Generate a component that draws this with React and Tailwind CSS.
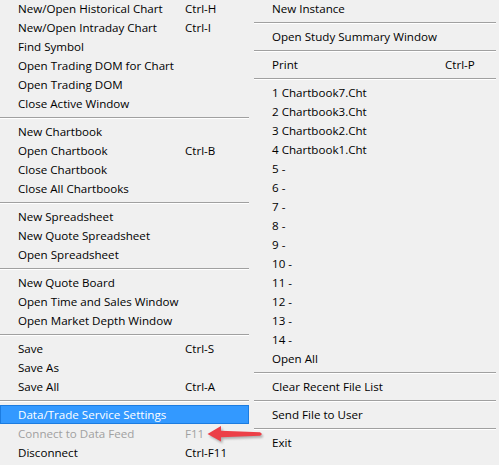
import React from 'react';

const leftGroups = [
  [
    ['New/Open Historical Chart', 'Ctrl-H'],
    ['New/Open Intraday Chart', 'Ctrl-I'],
    ['Find Symbol'],
    ['Open Trading DOM for Chart'],
    ['Open Trading DOM'],
    ['Close Active Window'],
  ],
  [
    ['New Chartbook'],
    ['Open Chartbook', 'Ctrl-B'],
    ['Close Chartbook'],
    ['Close All Chartbooks'],
  ],
  [['New Spreadsheet'], ['New Quote Spreadsheet'], ['Open Spreadsheet']],
  [['New Quote Board'], ['Open Time and Sales Window'], ['Open Market Depth Window']],
  [['Save', 'Ctrl-S'], ['Save As'], ['Save All', 'Ctrl-A']],
  [
    ['Data/Trade Service Settings', '', 'active'],
    ['Connect to Data Feed', 'F11', 'disabled'],
    ['Disconnect', 'Ctrl-F11'],
  ],
];

const rightGroups = [
  [['New Instance']],
  [['Open Study Summary Window']],
  [['Print', 'Ctrl-P']],
  [
    ['1 Chartbook7.Cht'],
    ['2 Chartbook3.Cht'],
    ['3 Chartbook2.Cht'],
    ['4 Chartbook1.Cht'],
    ['5 -'],
    ['6 -'],
    ['7 -'],
    ['8 -'],
    ['9 -'],
    ['10 -'],
    ['11 -'],
    ['12 -'],
    ['13 -'],
    ['14 -'],
    ['Open All'],
  ],
  [['Clear Recent File List']],
  [['Send File to User']],
  [['Exit']],
];

const Separator = () => (
  <div className="h-[9px] flex flex-col justify-center">
    <div className="h-px bg-[#a0a0a0]" />
    <div className="h-px bg-white" />
  </div>
);

const Item = ({ label, shortcut, state, labelWidth }) => {
  let rowClass = 'h-[19px] flex items-center pl-[18px] text-black';
  if (state === 'active') {
    rowClass = 'h-[19px] flex items-center pl-[17px] text-white bg-[#3399ff] border border-[#1c7ce0]';
  } else if (state === 'disabled') {
    rowClass = 'h-[19px] flex items-center pl-[18px] text-[#a0a0a0]';
  }
  return (
    <div className={rowClass}>
      <span className="shrink-0 whitespace-nowrap" style={{ width: labelWidth }}>
        {label}
      </span>
      <span className="whitespace-nowrap">{shortcut}</span>
    </div>
  );
};

const Column = ({ groups, labelWidth, className }) => (
  <div className={className}>
    {groups.map((group, gi) => (
      <React.Fragment key={gi}>
        {gi > 0 && <Separator />}
        {group.map(([label, shortcut, state]) => (
          <Item
            key={label}
            label={label}
            shortcut={shortcut}
            state={state}
            labelWidth={labelWidth}
          />
        ))}
      </React.Fragment>
    ))}
  </div>
);

const App = () => {
  return (
    <div
      className="relative w-[499px] h-[465px] overflow-hidden bg-[#f0f0f0] text-[11.6px] leading-none"
      style={{ fontFamily: '"Segoe UI", "Open Sans", "Liberation Sans", sans-serif' }}
    >
      <div className="flex -mt-px">
        <Column groups={leftGroups} labelWidth={167} className="w-[249px]" />
        <Column groups={rightGroups} labelWidth={173} className="w-[242px] ml-[5px]" />
      </div>

      {/* red arrow pointing at the F11 shortcut */}
      <svg
        className="absolute left-[205px] top-[420px]"
        width="62"
        height="26"
        viewBox="0 0 62 26"
      >
        <defs>
          <filter id="arrowShadow" x="-20%" y="-40%" width="140%" height="180%">
            <feGaussianBlur stdDeviation="1.2" />
          </filter>
        </defs>
        <path
          d="M2.5 14 L16 6 L16 10.8 L55 12.2 Q58.5 14 55 15.8 L16 17.2 L16 21.5 Z"
          fill="#7a7a7a"
          opacity="0.55"
          transform="translate(1.5 2)"
          filter="url(#arrowShadow)"
        />
        <path
          d="M2.5 14 L16 6 L16 10.8 L55 12.2 Q58.5 14 55 15.8 L16 17.2 L16 21.5 Z"
          fill="#ec3f47"
        />
      </svg>
    </div>
  );
};

export default App;
